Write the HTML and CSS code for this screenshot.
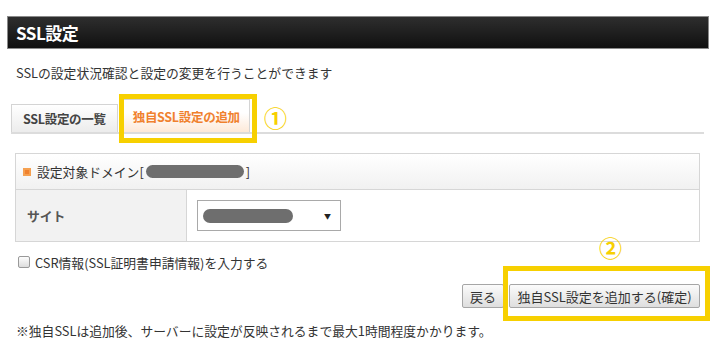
FILE: index.html
```html
<!DOCTYPE html>
<html lang="ja">
<head>
  <meta charset="UTF-8" />
  <title>SSL設定</title>
  <link rel="stylesheet" href="styles.css">
</head>
<body>

<div class="page">
  <div class="title-bar">
    <h1>SSL設定</h1>
  </div>

  <p class="lead">SSLの設定状況確認と設定の変更を行うことができます</p>

  <!-- Tabs -->
  <div class="tabs">
    <div class="tab">SSL設定の一覧</div>
    <div class="tab active">独自SSL設定の追加<span class="mark-box mark-tab"></span></div>
    <span class="mark-num mark-num-1">①</span>
  </div>

  <!-- Form panel -->
  <div class="panel">
    <div class="panel-head">
      <span class="head-icon"></span>
      設定対象ドメイン[<span class="blur blur-domain"></span>]
    </div>
    <div class="panel-row">
      <div class="row-label">サイト</div>
      <div class="row-field">
        <div class="select">
          <span class="blur blur-site"></span>
          <span class="caret">▼</span>
        </div>
      </div>
    </div>
  </div>

  <label class="check-row">
    <span class="checkbox"></span>
    CSR情報(SSL証明書申請情報)を入力する
  </label>

  <div class="actions">
    <button class="btn">戻る</button>
    <button class="btn btn-main">独自SSL設定を追加する(確定)
      <span class="mark-box mark-btn"></span>
      <span class="mark-num mark-num-2">②</span>
    </button>
  </div>

  <p class="note">※独自SSLは追加後、サーバーに設定が反映されるまで最大1時間程度かかります。</p>
</div>

</body>
</html>
```

FILE: styles.css
```css
:root {
  --text-color: #333;
  --line-color: #d9d9d9;
  --accent: #f0812e;
  --mark: #f7d000;
}

body {
  margin: 0;
  padding: 0;
  background: #fff;
  color: var(--text-color);
  font-family: "Noto Sans CJK JP", "Noto Sans", sans-serif;
  font-size: 12.8px;
}

.page {
  position: relative;
  width: 720px;
  height: 346px;
  overflow: hidden;
}

.title-bar {
  margin: 16px 11px 0 7px;
  height: 33px;
  box-sizing: border-box;
  border: 1px solid #8a8a8a;
  background: linear-gradient(#2e2e2e, #101010);
  display: flex;
  align-items: center;
  padding-left: 8px;
}

.title-bar h1 {
  margin: 0;
  font-size: 17px;
  font-weight: bold;
  color: #fff;
  letter-spacing: -0.5px;
}

.lead {
  margin: 15px 0 0 16px;
  line-height: 18px;
}

.tabs {
  position: relative;
  display: flex;
  align-items: flex-end;
  gap: 5px;
  margin: 17px 16px 0 11px;
  height: 33px;
  border-bottom: 2px solid #dcdcdc;
}

.tab {
  position: relative;
  height: 28px;
  box-sizing: border-box;
  padding: 0 11px;
  display: flex;
  align-items: center;
  border: 1px solid #d4d4d4;
  border-bottom: none;
  background: linear-gradient(#fff, #ececec);
  font-size: 12.5px;
  font-weight: bold;
  color: #444;
  letter-spacing: -0.3px;
}

.tab.active {
  height: 33px;
  padding: 0 9px;
  color: var(--accent);
  background: linear-gradient(#fff 40%, #fde9d8);
}

.mark-box {
  position: absolute;
  border: 5px solid var(--mark);
  pointer-events: none;
}

.mark-tab {
  top: -6px;
  left: -5px;
  right: -8px;
  bottom: -11px;
}

.mark-num {
  position: absolute;
  color: var(--mark);
  font-size: 23px;
  line-height: 1;
  font-weight: bold;
}

.mark-num-1 {
  left: 253px;
  top: 7px;
}

.panel {
  margin: 19px 20px 0 15px;
  border: 1px solid #d6d6d6;
}

.panel-head {
  height: 35px;
  display: flex;
  align-items: center;
  padding-left: 7px;
  background: linear-gradient(#fff, #f1f1f1);
  border-bottom: 1px solid #d6d6d6;
}

.head-icon {
  width: 8px;
  height: 8px;
  margin-right: 6px;
  background: var(--accent);
  box-shadow: inset 0 0 0 2px #f5a050;
}

.blur {
  display: inline-block;
  background: #6e6e6e;
  border-radius: 8px;
}

.blur-domain {
  width: 98px;
  height: 13px;
  margin: 0 2px;
}

.panel-row {
  display: flex;
  height: 51px;
}

.row-label {
  width: 171px;
  box-sizing: border-box;
  padding-left: 11px;
  display: flex;
  align-items: center;
  background: #f2f2f2;
  border-right: 1px solid #d6d6d6;
  font-weight: bold;
  color: #555;
}

.row-field {
  display: flex;
  align-items: center;
  padding-left: 10px;
}

.select {
  width: 144px;
  height: 31px;
  box-sizing: border-box;
  border: 1px solid #a9a9a9;
  display: flex;
  align-items: center;
  justify-content: space-between;
  padding: 0 9px 0 5px;
}

.blur-site {
  width: 90px;
  height: 14px;
}

.caret {
  font-size: 7px;
  color: #222;
}

.check-row {
  display: flex;
  align-items: center;
  gap: 5px;
  margin: 11px 0 0 18px;
  height: 18px;
}

.checkbox {
  width: 10px;
  height: 10px;
  border: 1px solid #999;
  border-radius: 2px;
  background: linear-gradient(#fdfdfd, #dcdcdc);
}

.actions {
  display: flex;
  justify-content: flex-end;
  gap: 5px;
  margin: 13px 20px 0 15px;
}

.btn {
  position: relative;
  height: 24px;
  padding: 0 7px;
  border: 1px solid #a6a6a6;
  border-radius: 2px;
  background: linear-gradient(#fbfbfb, #dedede);
  color: #333;
  font-family: inherit;
  font-size: 13px;
}

.btn-main {
  width: 191px;
}

.mark-btn {
  top: -19px;
  left: -7px;
  right: -11px;
  bottom: -14px;
}

.mark-num-2 {
  left: 89px;
  top: -49px;
}

.note {
  margin: 14px 0 0 16px;
  line-height: 18px;
}
```
